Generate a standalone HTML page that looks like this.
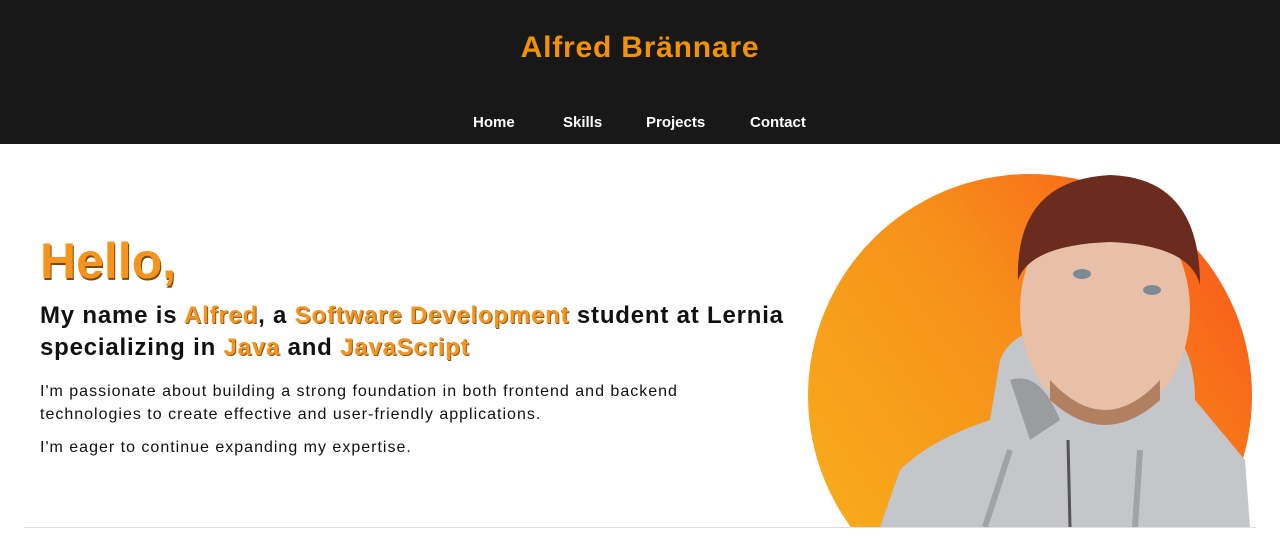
<!DOCTYPE html>
<html><head><meta charset="utf-8"><style>
*{margin:0;padding:0;box-sizing:border-box}
html,body{width:1280px;height:538px;overflow:hidden}
body{background:#fff;font-family:"Liberation Sans",sans-serif;position:relative}
header{height:144px;background:#181818;position:relative}
h1{position:absolute;top:31px;left:0;width:1280px;text-align:center;color:#f39200;font-size:30px;font-weight:bold;letter-spacing:0.8px}
nav{position:absolute;top:114px;left:0;width:1280px;height:20px;font-size:15px;font-weight:bold;color:#fff}
nav span{position:absolute}
.hello{position:absolute;left:40px;top:232px;font-size:50px;font-weight:bold;color:#f7941d;text-shadow:1px 2px 0 #7a4a10;letter-spacing:0}
.h2{position:absolute;left:40px;top:300px;font-size:24px;font-weight:bold;line-height:32px;color:#111;white-space:nowrap;letter-spacing:0.8px}
.o{color:#f7941d;text-shadow:1px 1px 0 #8a5a20}
p{position:absolute;left:40px;font-size:16px;line-height:23px;color:#111;white-space:nowrap;letter-spacing:1px}
.line{position:absolute;left:24px;top:527px;width:1232px;height:1px;background:#ddd}
</style></head><body>
<header>
<h1>Alfred Brännare</h1>
<nav><span style="left:473px">Home</span><span style="left:563px">Skills</span><span style="left:646px">Projects</span><span style="left:750px">Contact</span></nav>
</header>
<div class="hello">Hello,</div>
<div class="h2">My name is <span class="o">Alfred</span>, a <span class="o">Software Development</span> student at Lernia<br>specializing in <span class="o">Java</span> and <span class="o">JavaScript</span></div>
<p style="top:380px">I'm passionate about building a strong foundation in both frontend and backend<br>technologies to create effective and user-friendly applications.</p>
<p style="top:436px">I'm eager to continue expanding my expertise.</p>
<svg style="position:absolute;left:800px;top:160px" width="470" height="367" viewBox="800 160 470 367">
<defs>
<linearGradient id="g" x1="0" y1="1" x2="1" y2="0.3"><stop offset="0" stop-color="#f8b21c"/><stop offset="0.6" stop-color="#f7901a"/><stop offset="1" stop-color="#f8601a"/></linearGradient>
<clipPath id="c"><rect x="800" y="160" width="470" height="367"/></clipPath>
</defs>
<g clip-path="url(#c)">
<circle cx="1030" cy="396" r="222" fill="url(#g)"/>
<path d="M880 527 L900 470 Q930 440 990 420 L1000 360 Q1010 335 1040 330 L1170 330 Q1195 350 1195 400 Q1220 430 1245 460 L1250 527 Z" fill="#c4c6ca"/>
<path d="M1010 380 Q1040 370 1060 420 L1030 440 Z" fill="#9a9ca0"/>
<ellipse cx="1105" cy="310" rx="85" ry="110" fill="#e8c0a8"/>
<path d="M1050 380 Q1105 440 1160 380 L1160 400 Q1105 450 1050 400 Z" fill="#b08060"/>
<path d="M1018 280 Q1015 180 1110 175 Q1200 178 1200 285 Q1190 245 1110 242 Q1030 245 1018 280 Z" fill="#6b2b1e"/>
<ellipse cx="1082" cy="274" rx="9" ry="5" fill="#7a8a96"/>
<ellipse cx="1152" cy="290" rx="9" ry="5" fill="#7a8a96"/>
<path d="M1068 440 L1070 527" stroke="#555" stroke-width="3"/>
<path d="M1010 450 L985 527 M1140 450 L1135 527" stroke="#a0a2a6" stroke-width="6"/>
</g>
</svg>
<div class="line"></div>
</body></html>
